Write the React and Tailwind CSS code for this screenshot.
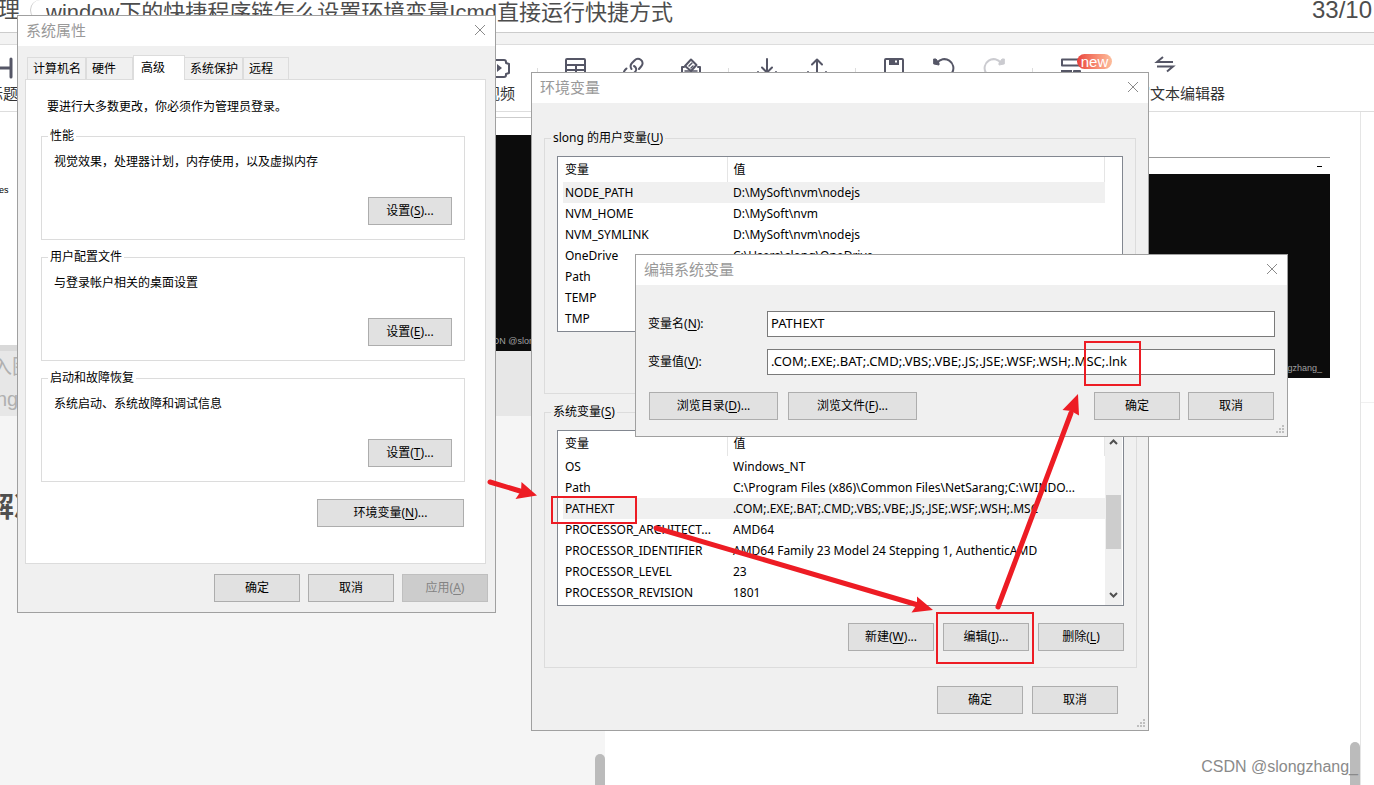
import React, { useState } from 'react';

const userVars = [
  { name: 'NODE_PATH', value: 'D:\\MySoft\\nvm\\nodejs', selected: true },
  { name: 'NVM_HOME', value: 'D:\\MySoft\\nvm' },
  { name: 'NVM_SYMLINK', value: 'D:\\MySoft\\nvm\\nodejs' },
  { name: 'OneDrive', value: 'C:\\Users\\slong\\OneDrive' },
  { name: 'Path', value: '' },
  { name: 'TEMP', value: '' },
  { name: 'TMP', value: '' },
];

const systemVars = [
  { name: 'OS', value: 'Windows_NT' },
  { name: 'Path', value: 'C:\\Program Files (x86)\\Common Files\\NetSarang;C:\\WINDO...' },
  { name: 'PATHEXT', value: '.COM;.EXE;.BAT;.CMD;.VBS;.VBE;.JS;.JSE;.WSF;.WSH;.MSC', selected: true },
  { name: 'PROCESSOR_ARCHITECT...', value: 'AMD64' },
  { name: 'PROCESSOR_IDENTIFIER', value: 'AMD64 Family 23 Model 24 Stepping 1, AuthenticAMD' },
  { name: 'PROCESSOR_LEVEL', value: '23' },
  { name: 'PROCESSOR_REVISION', value: '1801' },
];

const settingGroups = [
  { title: '性能', text: '视觉效果，处理器计划，内存使用，以及虚拟内存', hotkey: 'S' },
  { title: '用户配置文件', text: '与登录帐户相关的桌面设置', hotkey: 'E' },
  { title: '启动和故障恢复', text: '系统启动、系统故障和调试信息', hotkey: 'T' },
];

function Hotkey({ text, k, suffix = '' }) {
  return (
    <>
      {text}(<span className="underline underline-offset-2">{k}</span>){suffix}
    </>
  );
}

function WinButton({ children, width = 'w-[86px]', disabled }) {
  const colors = disabled
    ? 'bg-[#cccccc] border-[#bfbfbf] text-[#838383]'
    : 'bg-[#e1e1e1] border-[#adadad] text-black';
  return (
    <button type="button" disabled={disabled} className={`${width} ${colors} h-7 border text-xs leading-4 whitespace-nowrap`}>
      {children}
    </button>
  );
}

function TitleBar({ title }) {
  return (
    <div className="flex h-[30px] items-center justify-between bg-white pb-[2px] pl-2 pr-[9px]">
      <h2 className="text-[15px] leading-5 text-[#999999]">{title}</h2>
      <button type="button" aria-label="关闭">
        <svg width="12" height="12" viewBox="0 0 12 12" fill="none" stroke="#8a8a8a">
          <path d="M1 1l10 10M11 1L1 11" />
        </svg>
      </button>
    </div>
  );
}

function Grip() {
  return (
    <svg className="absolute bottom-[2px] right-[2px]" width="9" height="9" viewBox="0 0 9 9" fill="#bfbfbf">
      <path d="M6 0h2v2H6zM3 3h2v2H3zM6 3h2v2H6zM0 6h2v2H0zM3 6h2v2H3zM6 6h2v2H6z" />
    </svg>
  );
}

function VarTable({ rows, scroll }) {
  return (
    <div className="flex h-44 justify-between border border-[#828790] bg-white pl-[5px]">
      <table className="w-[542px] table-fixed self-start text-left text-xs leading-4">
        <thead>
          <tr className="h-[25px]">
            <th className="w-[164px] border-r border-[#e5e5e5] p-0 pl-[2px] font-normal">变量</th>
            <th className="border-r border-[#e5e5e5] p-0 pl-[6px] font-normal">值</th>
          </tr>
        </thead>
        <tbody>
          {rows.map(row => (
            <tr key={row.name} className={row.selected ? 'h-[21px] bg-[#f0f0f0]' : 'h-[21px]'}>
              <td className="whitespace-nowrap p-0 pl-[2px]">{row.name}</td>
              <td className="whitespace-nowrap p-0 pl-[6px]">{row.value}</td>
            </tr>
          ))}
        </tbody>
      </table>
      {scroll && (
        <div className="mr-px flex w-[17px] flex-col items-center bg-[#f0f0f0]">
          <svg className="mt-[6px]" width="9" height="9" viewBox="0 0 9 9" fill="none" stroke="#505050" strokeWidth="2">
            <path d="M1 7l3.500-3.500L8 7" />
          </svg>
          <div className="mt-[49px] h-[54px] w-[15px] bg-[#cdcdcd]" />
          <svg className="mb-[5px] mt-auto" width="9" height="9" viewBox="0 0 9 9" fill="none" stroke="#505050" strokeWidth="2">
            <path d="M1 2l3.500 3.500L8 2" />
          </svg>
        </div>
      )}
    </div>
  );
}

function SystemProperties() {
  const tab = 'border border-b-0 border-[#dcdcdc] pl-[5px] text-left whitespace-nowrap';
  return (
    <section className="absolute left-[17px] top-[15px] w-[479px] border border-[#a0a0a0] bg-[#f0f0f0] text-xs leading-4 text-black">
      <TitleBar title="系统属性" />
      <div className="ml-[7px] mr-[9px] pt-[9px]">
        <div className="flex h-6 items-end pl-[2px]" role="tablist">
          <button type="button" role="tab" className={`${tab} h-[22px] w-[59px]`}>计算机名</button>
          <button type="button" role="tab" className={`${tab} h-[22px] w-[47px]`}>硬件</button>
          <button type="button" role="tab" aria-selected="true" className="-mb-px h-[25px] w-[52px] border border-b-0 border-[#dcdcdc] bg-white pb-px pl-[7px] text-left">
            高级
          </button>
          <button type="button" role="tab" className={`${tab} h-[22px] w-[58px] border-l-0`}>系统保护</button>
          <button type="button" role="tab" className={`${tab} h-[22px] w-[46px]`}>远程</button>
        </div>
        <div className="border border-[#dcdcdc] bg-white pb-9 pl-[15px] pr-[20px] pt-[19px]">
          <p className="pl-[6px]">要进行大多数更改，你必须作为管理员登录。</p>
          <div className="mt-[13px] flex flex-col gap-[9px]">
            {settingGroups.map(group => (
              <fieldset key={group.title} className="h-28 border border-[#dcdcdc] pl-3 pr-3">
                <legend className="-ml-[6px] px-[2px]">{group.title}</legend>
                <p className="mb-[27px] mt-[10px]">{group.text}</p>
                <div className="flex justify-end">
                  <WinButton width="w-[84px]"><Hotkey text="设置" k={group.hotkey} suffix="..." /></WinButton>
                </div>
              </fieldset>
            ))}
          </div>
          <div className="mt-[17px] flex justify-end pr-px">
            <WinButton width="w-[147px]"><Hotkey text="环境变量" k="N" suffix="..." /></WinButton>
          </div>
        </div>
      </div>
      <div className="flex justify-end gap-2 pb-[10px] pr-[7px] pt-[10px]">
        <WinButton>确定</WinButton>
        <WinButton>取消</WinButton>
        <WinButton disabled><Hotkey text="应用" k="A" /></WinButton>
      </div>
    </section>
  );
}

function EnvironmentVariables() {
  return (
    <section className="absolute left-[531px] top-[72px] w-[618px] border border-[#a0a0a0] bg-[#f0f0f0] text-xs leading-4 text-black">
      <TitleBar title="环境变量" />
      <div className="flex flex-col gap-[10px] px-3 pt-[27px]">
        <fieldset className="h-[264px] border border-[#dcdcdc] px-3">
          <legend className="-ml-[6px] px-[2px]"><Hotkey text="slong 的用户变量" k="U" /></legend>
          <div className="pt-[10px]">
            <VarTable rows={userVars} />
          </div>
        </fieldset>
        <fieldset className="h-[264px] border border-[#dcdcdc] px-3">
          <legend className="-ml-[6px] px-[2px]"><Hotkey text="系统变量" k="S" /></legend>
          <div className="pt-[10px]">
            <VarTable rows={systemVars} scroll />
          </div>
          <div className="flex justify-end gap-[9px] pt-[17px]">
            <WinButton><Hotkey text="新建" k="W" suffix="..." /></WinButton>
            <WinButton><Hotkey text="编辑" k="I" suffix="..." /></WinButton>
            <WinButton><Hotkey text="删除" k="L" /></WinButton>
          </div>
        </fieldset>
      </div>
      <div className="flex justify-end gap-[9px] pb-4 pr-[30px] pt-[18px]">
        <WinButton>确定</WinButton>
        <WinButton>取消</WinButton>
      </div>
      <Grip />
    </section>
  );
}

function EditVariable() {
  const [name, setName] = useState('PATHEXT');
  const [value, setValue] = useState('.COM;.EXE;.BAT;.CMD;.VBS;.VBE;.JS;.JSE;.WSF;.WSH;.MSC;.lnk');
  const input = 'h-[26px] flex-1 border border-[#7a7a7a] bg-white px-[3px] pb-[3px] text-[13px] leading-4 outline-none';
  return (
    <section className="absolute left-[635px] top-[254px] w-[653px] border border-[#a0a0a0] bg-[#f0f0f0] text-xs leading-4 text-black">
      <TitleBar title="编辑系统变量" />
      <div className="flex flex-col gap-3 pl-3 pr-3 pt-[26px]">
        <div className="flex items-center">
          <label htmlFor="var-name" className="w-[119px]"><Hotkey text="变量名" k="N" suffix=":" /></label>
          <input id="var-name" type="text" className={input} value={name} onChange={(e) => setName(e.target.value)} />
        </div>
        <div className="flex items-center">
          <label htmlFor="var-value" className="w-[119px]"><Hotkey text="变量值" k="V" suffix=":" /></label>
          <input id="var-value" type="text" className={input} value={value} onChange={(e) => setValue(e.target.value)} />
        </div>
      </div>
      <div className="flex gap-[10px] px-[13px] pb-4 pt-[17px]">
        <WinButton width="w-[129px]"><Hotkey text="浏览目录" k="D" suffix="..." /></WinButton>
        <WinButton width="w-[129px]"><Hotkey text="浏览文件" k="F" suffix="..." /></WinButton>
        <div className="ml-auto flex gap-2">
          <WinButton>确定</WinButton>
          <WinButton>取消</WinButton>
        </div>
      </div>
      <Grip />
    </section>
  );
}

function ToolIcon({ children, className = '' }) {
  return (
    <svg className={className} width="22" height="22" viewBox="0 0 22 22" fill="none" stroke="#555666" strokeWidth="2" strokeLinecap="round" strokeLinejoin="round">
      {children}
    </svg>
  );
}

function Tool({ label, width = 'w-[50px]', children }) {
  return (
    <button type="button" className={`${width} flex shrink-0 flex-col items-center text-[15px] leading-5 text-[#333333] whitespace-nowrap`}>
      {children}
      {label && <span className="mt-[5px]">{label}</span>}
    </button>
  );
}

function Separator() {
  return <div className="mx-2 mt-[23px] h-5 w-px shrink-0 bg-[#dddddd]" />;
}

function Toolbar() {
  return (
    <div className="flex h-[67px] shrink-0 items-start overflow-hidden border-b border-[#dddddd] bg-white">
      <div className="-ml-[26px] mr-[439px] flex pt-3">
        <Tool width="w-[58px]" label="标题">
          <ToolIcon><path d="M2 2v18M19 2v18M2 11h17" strokeWidth="3" /></ToolIcon>
        </Tool>
      </div>
      <div className="flex pt-3">
        <Tool width="w-[58px]" label="视频">
          <ToolIcon>
            <path d="M2 3h13a2 2 0 0 1 2 2v1l3 1v9l-3 1v1a2 2 0 0 1-2 2H2z" />
            <path d="M8 7l5 4-5 4z" fill="#555666" stroke="none" />
          </ToolIcon>
        </Tool>
      </div>
      <Separator />
      <div className="flex pt-3">
        <Tool width="w-[58px]">
          <ToolIcon><rect x="2" y="2" width="19" height="18" rx="1" /><path d="M2 8h19M2 13h19M12 8v12" /></ToolIcon>
        </Tool>
        <Tool width="w-[58px]">
          <ToolIcon>
            <path d="M9.500 12C8 9.500 8.500 7.500 10 6l2.500-2.500c2-2 4.500-2 6.500-.5s2 4.500.5 6L17 12" />
            <path d="M12 9c2 1 3 3.500 1.500 5.500L10 18c-2 2-4 2-6 1s-3-4-1-6l1.500-1.500" />
          </ToolIcon>
        </Tool>
        <Tool width="w-[58px]">
          <ToolIcon>
            <path d="M4 10H2v10h18V10h-2" />
            <path d="M5 9l6-6.500L16.500 8 11 14z" />
            <path d="M9 9l3-3M11 11l2-2M5 14h12" strokeWidth="1.500" />
          </ToolIcon>
        </Tool>
      </div>
      <Separator />
      <div className="flex px-[5px] pt-3">
        <Tool><ToolIcon><path d="M11 2v13M6 10.500l5 5 5-5M2 15v5h18v-5" /></ToolIcon></Tool>
        <Tool><ToolIcon><path d="M11 16V2.500M6 7.500l5-5 5 5M2 15v5h18v-5" /></ToolIcon></Tool>
      </div>
      <Separator />
      <div className="flex px-[5px] pt-3">
        <Tool>
          <ToolIcon>
            <rect x="2" y="2" width="18" height="18" rx="1" />
            <path d="M6 2h10v6H6z" fill="#555666" stroke="none" />
            <path d="M12 3.500h2v2h-2z" fill="#ffffff" stroke="none" />
          </ToolIcon>
        </Tool>
        <Tool>
          <ToolIcon><path d="M4 6A9 9 0 1 1 7 19" /><path d="M1 2l2 0 3 4v2l-5-1z" fill="#555666" stroke="#555666" strokeWidth="1" /></ToolIcon>
        </Tool>
        <Tool>
          <ToolIcon className="opacity-30"><path d="M18 6A9 9 0 1 0 15 19" /><path d="M21 2h-2l-3 4v2l5-1z" fill="#555666" stroke="#555666" strokeWidth="1" /></ToolIcon>
        </Tool>
      </div>
      <Separator />
      <div className="flex px-[5px] pt-3">
        <div className="relative">
          <Tool><ToolIcon><path d="M2 2.500h18v6H2zM14 14h6v6h-6z" strokeWidth="2" /><path d="M1 13h11v7H1z" fill="#555666" stroke="none" /></ToolIcon></Tool>
          <span className="absolute -top-[3px] left-[31px] h-[15px] w-[35px] rounded-full bg-linear-to-r from-[#e8403c] to-[#fcbd9c] text-center text-[15px] leading-[15px] text-white">
            new
          </span>
        </div>
      </div>
      <div className="ml-1 flex pt-[9px]">
        <Tool width="w-[120px]">
          <ToolIcon><path d="M19 8H3l6-5M3 12.500h16l-6 5" strokeLinecap="butt" strokeLinejoin="miter" /></ToolIcon>
          <span className="mt-2">使用富文本编辑器</span>
        </Tool>
      </div>
    </div>
  );
}

function EditorPage() {
  const [title, setTitle] = useState('window下的快捷程序链怎么设置环境变量Icmd直接运行快捷方式');
  return (
    <div className="flex h-screen flex-col overflow-hidden bg-[#f3f3f3] font-['Liberation_Sans','Noto_Sans_CJK_SC',sans-serif]">
      <header className="flex h-[33px] shrink-0 items-center overflow-hidden border-b border-[#cccccc] bg-white pb-3 text-[22px] leading-5 text-[#4d4d4d]">
        <a href="#list" className="-ml-[2px] w-8 shrink-0">理</a>
        <div className="h-5 w-4 shrink-0 rounded-l-full border-l border-[#cccccc]" />
        <input aria-label="标题" type="text" className="h-8 min-w-0 flex-1 outline-none" value={title} onChange={(e) => setTitle(e.target.value)} />
        <span className="w-[62px] shrink-0 whitespace-nowrap text-2xl leading-5">33/10</span>
      </header>
      <div className="mt-[11px] h-px shrink-0 bg-[#dddddd]" />
      <Toolbar />
      <main className="flex min-h-0 flex-1">
        <div className="relative w-[44%] overflow-hidden bg-[#f5f5f5]">
          <div className="flex h-[239px] bg-white">
            <div className="-ml-px w-1/2 border-b-[6px] border-[#d9d9d9] pt-[70px] text-[9px] leading-4">es</div>
            <div className="flex flex-1 flex-col pt-[5px]">
              <div className="h-[18px] border-t border-[#cccccc]" />
              <div className="flex flex-1 items-end bg-[#0c0c0c] pb-1 pl-[179px] text-[9px] leading-3 text-[#a0a0a0]">CSDN @slongzhang_</div>
            </div>
          </div>
          <div className="-ml-2 flex h-[65px] flex-col bg-[#e7e7e7] text-[20px] leading-8 text-[#b0b0b0]">
            <span>入图</span>
            <span className="pl-1">ng</span>
          </div>
          <h3 className="-ml-[14px] mt-[76px] text-[28px] font-bold leading-8 text-[#4f4f4f]">解决</h3>
          <div className="absolute bottom-0 right-0 h-[31px] w-[10px] rounded-t-full bg-[#bbbbbb]" />
        </div>
        <div className="relative flex-1 border-r border-[#e5e5e5] bg-white pr-[30px] pt-[45px]">
          <div className="flex h-[17px] items-center justify-end border-t border-[#999999] pr-2">
            <div className="h-px w-[5px] bg-black" />
          </div>
          <div className="flex h-[204px] items-end justify-end bg-[#0c0c0c] pb-1 pr-2 text-[9px] leading-3 text-[#a0a0a0]">CSDN @slongzhang_</div>
          <div className="absolute bottom-0 right-0 h-[43px] w-[10px] rounded-t-full bg-[#bbbbbb]" />
        </div>
        <aside className="w-[13px] bg-white">
          <div className="h-[291px] border-b border-[#f0f0f0]" />
        </aside>
      </main>
    </div>
  );
}

// red boxes and arrows that lead from one dialog to the next
function Annotations() {
  return (
    <svg className="pointer-events-none absolute left-0 top-0" width="1374" height="785" viewBox="0 0 1374 785" fill="none" stroke="#ed1c24">
      <g strokeWidth="2">
        <rect x="552" y="497" width="84" height="26" />
        <rect x="937" y="613" width="96" height="50" />
        <rect x="1085" y="342" width="55" height="43" />
      </g>
      <g strokeWidth="5" strokeLinecap="round">
        <path d="M490 482l30 9" />
        <path d="M656 528l262 77" />
        <path d="M998 607l73-194" />
      </g>
      <g fill="#ed1c24" stroke="none">
        <path d="M537 495.500L521.500 482l-.5 9-5.500 8z" />
        <path d="M933 610L917 596.500l0 8-5.500 8z" />
        <path d="M1078 394l-15.500 16 8.500 1 8 4.500z" />
      </g>
    </svg>
  );
}

export default function App() {
  return (
    <div className="relative overflow-hidden">
      <EditorPage />
      <div className="font-['Noto_Sans','Noto_Sans_CJK_SC',sans-serif]">
        <SystemProperties />
        <EnvironmentVariables />
        <EditVariable />
      </div>
      <Annotations />
      <p className="absolute bottom-[6px] right-4 font-['Liberation_Sans',sans-serif] text-base leading-6 text-[#8a8a8a]">CSDN @slongzhang_</p>
    </div>
  );
}
